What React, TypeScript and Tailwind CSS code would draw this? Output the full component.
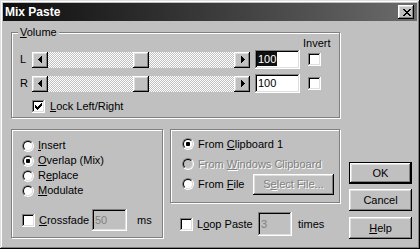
import React from "react";

const raised =
  "shadow-[inset_-1px_-1px_#000,inset_1px_1px_#fff,inset_-2px_-2px_#808080,inset_2px_2px_#dfdfdf]";
const sunken =
  "shadow-[inset_-1px_-1px_#fff,inset_1px_1px_#808080,inset_-2px_-2px_#dfdfdf,inset_2px_2px_#000]";
const etched = "border border-[#808080] shadow-[1px_1px_0_#fff,inset_1px_1px_0_#fff]";
const disabledText = "text-[#808080] [text-shadow:1px_1px_0_#fff]";

const CHECK = [
  "......X",
  ".....XX",
  "X...XXX",
  "XX.XXX.",
  "XXXXX..",
  ".XXX...",
  "..X....",
];
const CLOSE_X = [
  "XX....XX",
  ".XX..XX.",
  "..XXXX..",
  "...XX...",
  "..XXXX..",
  ".XX..XX.",
  "XX....XX",
];
const LEFT = ["...X", "..XX", ".XXX", "XXXX", ".XXX", "..XX", "...X"];
const RIGHT = ["X...", "XX..", "XXX.", "XXXX", "XXX.", "XX..", "X..."];

function Pixels({ rows, className }: { rows: string[]; className?: string }) {
  const w = rows[0].length;
  const h = rows.length;
  return (
    <svg
      width={w}
      height={h}
      viewBox={`0 0 ${w} ${h}`}
      shapeRendering="crispEdges"
      className={className}
    >
      {rows.flatMap((r, y) =>
        r.split("").map((c, x) =>
          c === "X" ? (
            <rect key={`${x}-${y}`} x={x} y={y} width={1} height={1} fill="currentColor" />
          ) : null
        )
      )}
    </svg>
  );
}

function Check({ checked }: { checked?: boolean }) {
  return (
    <div
      className={`w-[13px] h-[13px] shrink-0 bg-white ${sunken} flex items-center justify-center text-black`}
    >
      {checked && <Pixels rows={CHECK} />}
    </div>
  );
}

function Radio({ checked, disabled }: { checked?: boolean; disabled?: boolean }) {
  return (
    <div className="w-[12px] h-[12px] shrink-0 rounded-full border border-t-[#808080] border-l-[#808080] border-r-white border-b-white">
      <div
        className={`w-full h-full rounded-full border border-t-black border-l-black border-r-[#dfdfdf] border-b-[#dfdfdf] flex items-center justify-center ${
          disabled ? "bg-[#c0c0c0]" : "bg-white"
        }`}
      >
        {checked && <div className="w-[4px] h-[4px] rounded-[1px] bg-black" />}
      </div>
    </div>
  );
}

function SliderRow({ label, selected, className }: { label: string; selected?: boolean; className?: string }) {
  return (
    <div className={`h-[19px] flex items-center pl-[8px] ${className ?? ""}`}>
      <span className="w-[12px]">{label}</span>
      <div className="w-[218px] h-[16px] flex bg-[image:repeating-conic-gradient(#c0c0c0_0%_25%,#fff_0%_50%)] bg-[length:2px_2px]">
        <div className={`w-[16px] h-[16px] bg-[#c0c0c0] ${raised} flex items-center justify-center text-black`}>
          <Pixels rows={LEFT} className="-ml-[1px]" />
        </div>
        <div className="flex-1 flex justify-center">
          <div className={`w-[16px] h-[16px] bg-[#c0c0c0] ${raised}`} />
        </div>
        <div className={`w-[16px] h-[16px] bg-[#c0c0c0] ${raised} flex items-center justify-center text-black`}>
          <Pixels rows={RIGHT} className="ml-[1px]" />
        </div>
      </div>
      <div className={`ml-[5px] w-[45px] h-[19px] bg-white ${sunken} flex items-start pt-[2px] pl-[2px]`}>
        <span
          className={`leading-[14px] px-[1px] ${selected ? "bg-[#101010] text-white" : "text-black"}`}
        >
          100
        </span>
      </div>
      <div className="ml-[8px]">
        <Check />
      </div>
    </div>
  );
}

function Button({
  children,
  isDefault,
  disabled,
  className,
}: {
  children: React.ReactNode;
  isDefault?: boolean;
  disabled?: boolean;
  className?: string;
}) {
  return (
    <div
      className={`bg-[#c0c0c0] ${raised} flex items-center justify-center ${
        isDefault ? "border border-black" : ""
      } ${disabled ? disabledText : "text-black"} ${className ?? ""}`}
    >
      <span>{children}</span>
    </div>
  );
}

export default function App() {
  return (
    <div className="w-[420px] h-[249px] overflow-hidden bg-[#c0c0c0] p-[3px] flex flex-col font-['Liberation_Sans',Arial,sans-serif] text-[11px] leading-[13px] text-black shadow-[inset_-1px_-1px_#000,inset_1px_1px_#dfdfdf,inset_-2px_-2px_#808080,inset_2px_2px_#fff]">
      {/* Title bar */}
      <div className="h-[18px] shrink-0 flex items-center pl-[2px] pr-[3px] bg-linear-to-r from-[#0f0f0f] to-[#6c6c6c]">
        <span className="text-white font-bold text-[12px] leading-[14px]">Mix Paste</span>
        <div
          className={`ml-auto w-[16px] h-[14px] bg-[#c0c0c0] ${raised} flex items-center justify-center text-black`}
        >
          <Pixels rows={CLOSE_X} className="ml-[1px]" />
        </div>
      </div>

      {/* Body */}
      <div className="pl-[8px] pt-[11px] flex flex-col">
        {/* Volume group */}
        <div className={`relative w-[329px] h-[86px] ${etched} pt-[4px] flex flex-col`}>
          <span className="absolute left-[6px] top-[-7px] px-[2px] bg-[#c0c0c0]">
            <u>V</u>olume
          </span>
          <div className="h-[13px] pl-[291px]">Invert</div>
          <SliderRow label="L" selected />
          <SliderRow label="R" className="mt-[5px]" />
          <div className="mt-[7px] pl-[20px] flex items-center gap-[5px]">
            <Check checked />
            <span>
              <u>L</u>ock Left/Right
            </span>
          </div>
        </div>

        {/* Bottom row */}
        <div className="flex items-start mt-[11px]">
          {/* Mode group */}
          <div className={`w-[152px] h-[109px] ${etched} pl-[10px] pt-[8px] flex flex-col`}>
            <div className="h-[15px] flex items-center gap-[4px]">
              <Radio />
              <span>
                <u>I</u>nsert
              </span>
            </div>
            <div className="h-[15px] flex items-center gap-[4px]">
              <Radio checked />
              <span>
                <u>O</u>verlap (Mix)
              </span>
            </div>
            <div className="h-[15px] flex items-center gap-[4px]">
              <Radio />
              <span>
                R<u>e</u>place
              </span>
            </div>
            <div className="h-[15px] flex items-center gap-[4px]">
              <Radio />
              <span>
                <u>M</u>odulate
              </span>
            </div>
            <div className="mt-[11px] h-[22px] flex items-center">
              <Check />
              <span className="ml-[4px] w-[53px]">
                <u>C</u>rossfade
              </span>
              <div
                className={`w-[35px] h-[22px] bg-[#c0c0c0] ${sunken} flex items-center pl-[3px] text-[#808080]`}
              >
                50
              </div>
              <span className="ml-[10px]">ms</span>
            </div>
          </div>

          {/* Source column */}
          <div className="ml-[7px] w-[171px] flex flex-col">
            <div className={`w-[170px] h-[74px] ${etched} pl-[11px] pr-[5px] pt-[4px] flex flex-col`}>
              <div className="h-[20px] flex items-center gap-[4px]">
                <Radio checked />
                <span>
                  From <u>C</u>lipboard 1
                </span>
              </div>
              <div className="h-[20px] flex items-center gap-[4px]">
                <Radio disabled />
                <span className={disabledText}>
                  From <u>W</u>indows Clipboard
                </span>
              </div>
              <div className="h-[20px] flex items-center gap-[4px]">
                <Radio />
                <span>
                  From <u>F</u>ile
                </span>
                <Button disabled className="ml-auto w-[81px] h-[21px]">
                  S<u>e</u>lect File...
                </Button>
              </div>
            </div>
            <div className="mt-[9px] pl-[10px] h-[24px] flex items-center">
              <Check />
              <span className="ml-[4px] w-[61px]">
                L<u>o</u>op Paste
              </span>
              <div
                className={`w-[34px] h-[24px] bg-[#c0c0c0] ${sunken} flex items-center pl-[3px] text-[#808080]`}
              >
                3
              </div>
              <span className="ml-[6px]">times</span>
            </div>
          </div>

          {/* Buttons */}
          <div className="ml-[8px] pt-[33px] flex flex-col">
            <Button isDefault className="w-[63px] h-[22px]">
              OK
            </Button>
            <Button className="mt-[5px] w-[63px] h-[22px]">Cancel</Button>
            <Button className="mt-[6px] w-[63px] h-[22px]">
              <u>H</u>elp
            </Button>
          </div>
        </div>
      </div>
    </div>
  );
}
